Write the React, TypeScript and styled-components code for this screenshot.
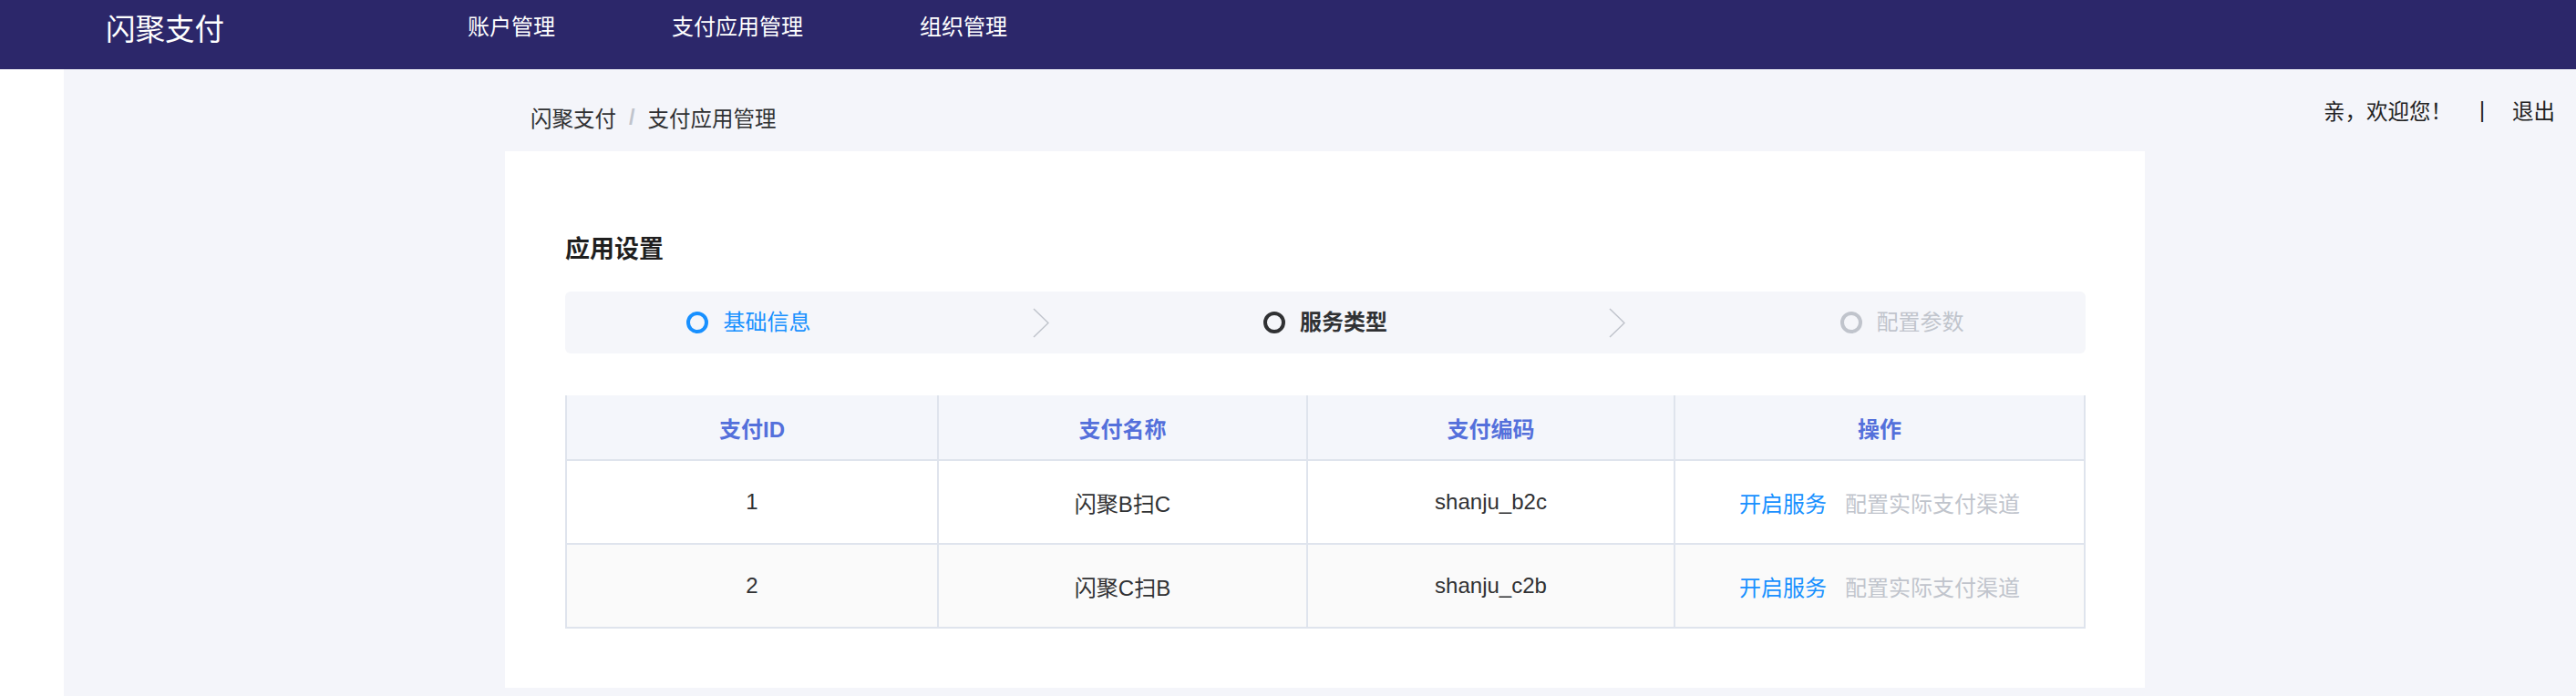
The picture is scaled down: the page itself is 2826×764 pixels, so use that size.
import { createGlobalStyle } from "styled-components";
import styled from "styled-components";

const GlobalStyle = createGlobalStyle`
  html, body {
    margin: 0;
    padding: 0;
    font-family: "Liberation Sans", "Noto Sans CJK SC", sans-serif;
    color: #303133;
  }
  * {
    box-sizing: border-box;
  }
`;

const NAV_ITEMS = ["账户管理", "支付应用管理", "组织管理"];

const STEPS = [
  { title: "基础信息", status: "finish" },
  { title: "服务类型", status: "process" },
  { title: "配置参数", status: "wait" },
];

const PAYMENTS = [
  { id: 1, name: "闪聚B扫C", code: "shanju_b2c" },
  { id: 2, name: "闪聚C扫B", code: "shanju_c2b" },
];

const STEP_COLORS = {
  finish: "#1890ff",
  process: "#303133",
  wait: "#c0c4cc",
};

export default function App() {
  return (
    <>
      <GlobalStyle />
      <Header>
        <Logo>闪聚支付</Logo>
        <Nav>
          {NAV_ITEMS.map((item) => (
            <NavItem key={item}>{item}</NavItem>
          ))}
        </Nav>
      </Header>
      <Body>
        <Sidebar />
        <Content>
          <Spacer />
          <Breadcrumb>
            <Crumb>闪聚支付</Crumb>
            <CrumbSeparator>/</CrumbSeparator>
            <Crumb>支付应用管理</Crumb>
          </Breadcrumb>
          <Welcome>
            <span>亲，欢迎您！</span>
            <WelcomeDivider>|</WelcomeDivider>
            <span>退出</span>
          </Welcome>
          <Spacer />
          <Card>
            <CardTitle>应用设置</CardTitle>
            <Steps>
              {STEPS.map((step, i) => {
                const isLast = i === STEPS.length - 1;
                return (
                  <Step key={step.title} $last={isLast}>
                    <StepIcon $color={STEP_COLORS[step.status]} />
                    <StepTitle
                      $color={STEP_COLORS[step.status]}
                      $bold={step.status === "process"}
                    >
                      {step.title}
                    </StepTitle>
                    {!isLast && (
                      <StepArrow>
                        <svg width="18" height="33" viewBox="0 0 18 33">
                          <path
                            d="M1 1 L17 16.5 L1 32"
                            fill="none"
                            stroke="#c0c4cc"
                            strokeWidth="1.5"
                          />
                        </svg>
                      </StepArrow>
                    )}
                  </Step>
                );
              })}
            </Steps>
            <Table>
              <HeadCell>支付ID</HeadCell>
              <HeadCell>支付名称</HeadCell>
              <HeadCell>支付编码</HeadCell>
              <HeadCell>操作</HeadCell>
              {PAYMENTS.map((p, i) => (
                <Row key={p.id} $striped={i % 2 === 1}>
                  <Cell>{p.id}</Cell>
                  <Cell>{p.name}</Cell>
                  <Cell>{p.code}</Cell>
                  <Cell>
                    <ActionLink>开启服务</ActionLink>
                    <ActionDisabled>配置实际支付渠道</ActionDisabled>
                  </Cell>
                </Row>
              ))}
            </Table>
          </Card>
        </Content>
      </Body>
    </>
  );
}

const Header = styled.header`
  height: 76px;
  background: #2c276a;
  display: flex;
  align-items: flex-start;
  padding-left: 116px;
  color: #ffffff;
`;

const Logo = styled.div`
  font-size: 32.5px;
  line-height: 67px;
  white-space: nowrap;
`;

const Nav = styled.nav`
  display: flex;
  gap: 128px;
  margin-left: 267px;
`;

const NavItem = styled.a`
  font-size: 24px;
  line-height: 60px;
  color: #ffffff;
  cursor: pointer;
  white-space: nowrap;
`;

const Body = styled.div`
  display: flex;
  min-height: calc(100vh - 76px);
`;

const Sidebar = styled.aside`
  width: 70px;
  flex-shrink: 0;
  background: #ffffff;
`;

const Content = styled.main`
  flex: 1;
  background: #f4f5fa;
  display: grid;
  grid-template-columns: 484px 1799px 1fr;
  grid-template-rows: 90px auto;
  align-content: start;
  padding-bottom: 10px;
`;

const Spacer = styled.div``;

const Breadcrumb = styled.div`
  display: flex;
  align-items: center;
  padding: 16px 0 0 28px;
  font-size: 23.5px;
`;

const Crumb = styled.span`
  color: #303133;
`;

const CrumbSeparator = styled.span`
  margin: 0 14px;
  color: #c0c4cc;
  font-weight: 700;
`;

const Welcome = styled.div`
  display: flex;
  align-items: center;
  justify-content: flex-end;
  padding-right: 23px;
  font-size: 23.5px;
  color: #222222;
  white-space: nowrap;
`;

const WelcomeDivider = styled.span`
  margin: 0 30px;
`;

const Card = styled.section`
  background: #ffffff;
  padding: 88px 65px 65px 66px;
`;

const CardTitle = styled.h2`
  margin: 0 0 26px;
  font-size: 27px;
  line-height: 40px;
  font-weight: 600;
  color: #1f1f1f;
`;

const Steps = styled.div`
  display: flex;
  align-items: center;
  height: 68px;
  padding: 0 8%;
  margin-bottom: 46px;
  background: #f5f6fa;
  border-radius: 6px;
`;

const Step = styled.div<{ $last: boolean }>`
  display: flex;
  align-items: center;
  flex: ${(p) => (p.$last ? "0 0 auto" : "0 1 50%")};
  min-width: 0;
`;

const StepIcon = styled.span<{ $color: string }>`
  width: 24px;
  height: 24px;
  flex-shrink: 0;
  border: 4px solid ${(p) => p.$color};
  border-radius: 50%;
  margin-right: 16px;
`;

const StepTitle = styled.span<{ $color: string; $bold: boolean }>`
  font-size: 24px;
  line-height: 30px;
  color: ${(p) => p.$color};
  font-weight: ${(p) => (p.$bold ? 600 : 400)};
  white-space: nowrap;
`;

const StepArrow = styled.span`
  flex: 1;
  display: flex;
  align-items: center;
  justify-content: center;
  padding-left: 8px;
`;

const Table = styled.div`
  display: grid;
  grid-template-columns: 408px 405px 403px 1fr;
  border-left: 2px solid #dfe4ed;
`;

const HeadCell = styled.div`
  height: 72px;
  display: flex;
  align-items: center;
  justify-content: center;
  background: #f4f6fb;
  border-right: 2px solid #dfe4ed;
  border-bottom: 2px solid #dfe4ed;
  font-size: 24px;
  font-weight: 700;
  color: #5470db;
`;

const Row = styled.div<{ $striped: boolean }>`
  display: contents;
  & > div {
    background: ${(p) => (p.$striped ? "#fafafa" : "#ffffff")};
  }
`;

const Cell = styled.div`
  height: 92px;
  display: flex;
  align-items: center;
  justify-content: center;
  border-right: 2px solid #dfe4ed;
  border-bottom: 2px solid #dfe4ed;
  font-size: 24px;
  color: #303133;
`;

const ActionLink = styled.a`
  color: #1890ff;
  margin-right: 20px;
  cursor: pointer;
`;

const ActionDisabled = styled.span`
  color: #c0c4cc;
`;
